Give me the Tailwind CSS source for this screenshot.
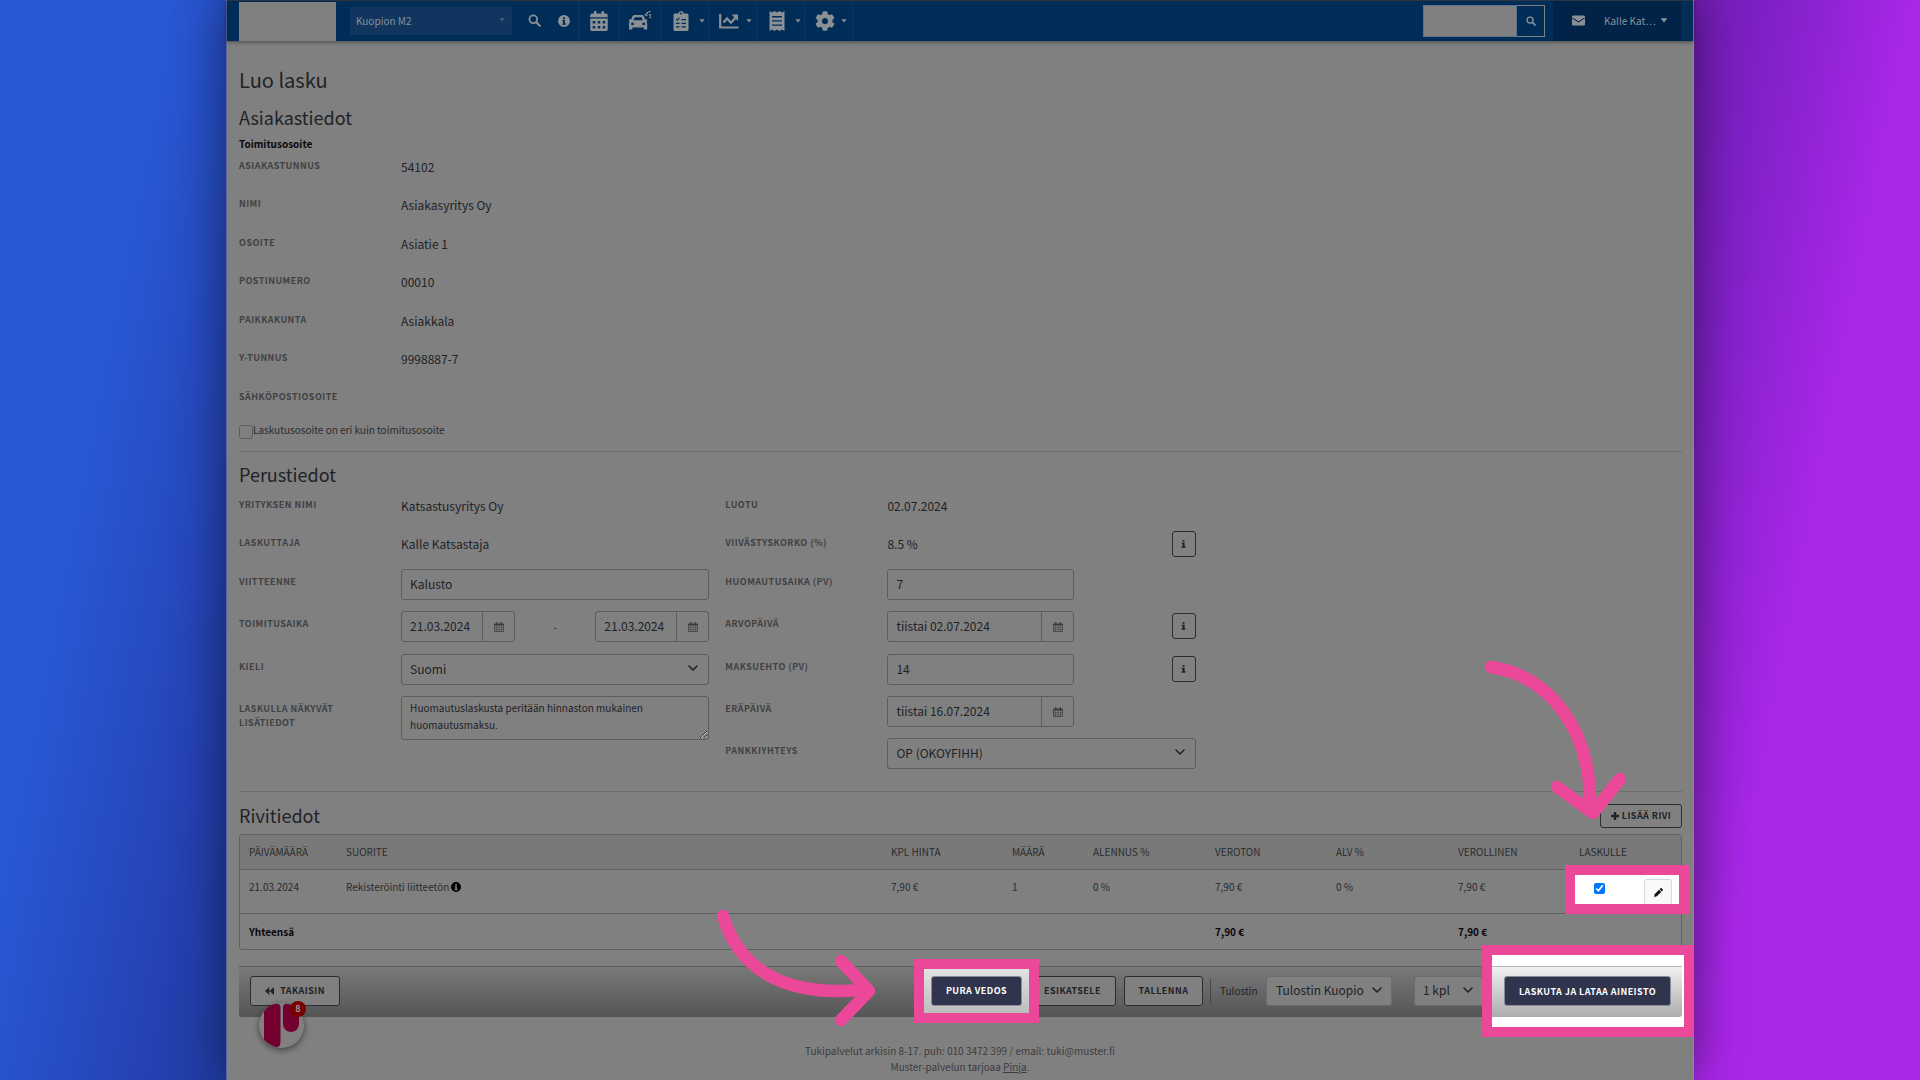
<!DOCTYPE html>
<html lang="fi">
<head>
<meta charset="utf-8">
<title>Luo lasku</title>
<script src="https://cdn.jsdelivr.net/npm/@tailwindcss/browser@4"></script>
</head>
<body class="flex min-h-screen overflow-x-hidden bg-[linear-gradient(101deg,#2958d5_8%,#2440b0_17%,#1e3a9a_22%,#6b1cab_78%,#7e20c6_83%,#a927e9_90%)] px-[226px] font-['Noto_Sans_CJK_SC','Source_Sans_Pro',sans-serif] text-[10px] leading-4 text-[#212226]">

<svg class="hidden" aria-hidden="true">
  <symbol id="search" viewBox="0 0 16 16"><circle cx="6.5" cy="6.5" r="4.8" fill="none" stroke="currentColor" stroke-width="2.2"/><path d="M10.2 10.2l4.3 4.3" stroke="currentColor" stroke-width="2.6" stroke-linecap="round"/></symbol>
  <symbol id="info" viewBox="0 0 16 16"><path fill="currentColor" fill-rule="evenodd" d="M8 0a8 8 0 1 0 0 16A8 8 0 0 0 8 0zM6.700 3h2.700v2.500H6.700zM5.700 6.600h3.700v4.700h1.100V13H5.700v-1.700h1.100V8.300H5.700z"/></symbol>
  <symbol id="i" viewBox="0 0 8 14"><path fill="currentColor" d="M2.500 0h3.200v3H2.500zM1 4.700h4.900v6.400H7.200V13.500H.8v-2.400h1.500V7H1z"/></symbol>
  <symbol id="caret" viewBox="0 0 8 5"><path fill="currentColor" d="M.5.3h7L4 4.600z"/></symbol>
  <symbol id="chevron" viewBox="0 0 12 12"><path d="M2 4l4 4 4-4" fill="none" stroke="currentColor" stroke-width="1.600" stroke-linecap="round" stroke-linejoin="round"/></symbol>
  <symbol id="smallcal" viewBox="0 0 14 14"><path fill="currentColor" fill-rule="evenodd" d="M1.200 2h1.600V.8Q2.800 0 3.800 0t1 .8V2h4.400V.8q0-.8 1-.8t1 .8V2h1.600Q14 2 14 3v10q0 1-1.200 1H1.200Q0 14 0 13V3q0-1 1.200-1zM1 5v2h2.500V5zm3.200 0v2h2.500V5zm3.200 0v2h2.500V5zm3.200 0v2H13V5zM1 7.700v2h2.500v-2zm3.200 0v2h2.500v-2zm3.200 0v2h2.500v-2zm3.200 0v2H13v-2zM1 10.500V13h2.500v-2.500zm3.200 0V13h2.500v-2.500zm3.200 0V13h2.500v-2.500zm3.200 0V13H13v-2.500z"/></symbol>
</svg>

<div class="relative flex min-w-0 flex-1 flex-col border-l border-r border-l-[#5a64a0] border-r-[#94849c] bg-[#808080] shadow-[0_0_48px_rgba(0,0,0,0.48)]">

  <header class="flex h-[41px] items-center border-t border-[#2b3440] bg-[#002c58] px-3 text-[#8b9095] shadow-[0_1px_4px_rgba(0,0,0,0.45)]">
    <a href="#" aria-label="Etusivu" class="h-[39px] w-[97px] shrink-0 bg-[#808080]"></a>
    <div class="relative ml-[14px] w-[162px]">
      <select aria-label="Toimipaikka" class="block h-7 w-full appearance-none bg-[#10355f] px-[6px] text-[10px] leading-4 text-[#8b9095]"><option>Kuopion M2</option></select>
      <svg class="pointer-events-none absolute right-[7px] top-[11px] h-1 w-[6px] text-[#555d66]"><use href="#caret"/></svg>
    </div>
    <nav class="flex h-full items-center [&>a]:pb-px">
      <a href="#" aria-label="Haku" class="ml-[7px] flex w-[30px] items-center justify-center"><svg class="size-[13px]"><use href="#search"/></svg></a>
      <a href="#" aria-label="Tiedot" class="flex w-[29px] items-center justify-center"><svg class="size-3"><use href="#info"/></svg></a>
      <a href="#" aria-label="Kalenteri" class="flex h-full w-[41px] items-center justify-center border-l border-[#0d3762]">
        <svg class="h-[20px] w-[18px]" viewBox="0 0 448 512"><path fill="currentColor" fill-rule="evenodd" d="M400 64h-48V16c0-9-7-16-16-16h-32c-9 0-16 7-16 16v48H160V16c0-9-7-16-16-16h-32c-9 0-16 7-16 16v48H48C21 64 0 85 0 112v48h448v-48c0-27-21-48-48-48zM0 192h448v272c0 27-21 48-48 48H48c-27 0-48-21-48-48zM64 256v64h64v-64zm128 0v64h64v-64zm128 0v64h64v-64zM64 384v64h64v-64zm128 0v64h64v-64zm128 0v64h64v-64z"/></svg>
      </a>
      <a href="#" aria-label="Ajoneuvot" class="flex h-full w-[41px] items-center justify-center border-l border-[#0d3762]">
        <svg class="h-[20px] w-[24px]" viewBox="0 0 24 20"><path fill="currentColor" fill-rule="evenodd" d="M6.500 4h7.500q1.300 0 1.900 1.300L17.200 8.500h2v1.700l-.9.400q.9.800.9 2.200v5.700h-3.400v-2H4.400v2H1v-5.700q0-1.400.9-2.200L1 10.200V8.500h2.100l1.400-3.200Q5.100 4 6.500 4zM6.700 6.200L5.500 9.200h9.400l-1.200-3zM4.500 11.500a1.400 1.400 0 1 0 0 2.800 1.400 1.400 0 0 0 0-2.800zm11.200 0a1.400 1.400 0 1 0 0 2.800 1.400 1.400 0 0 0 0-2.800z"/><path d="M17 3.200l2.200 1.600M19.700 1l-.7 2M21 4l2-.3M20.500.8L22.600.2M21.500 6l1.400.8" stroke="currentColor" stroke-width="1.600"/></svg>
      </a>
      <a href="#" aria-label="Tilaukset" class="flex h-full w-12 items-center border-l border-[#0d3762] pl-3">
        <svg class="h-[20px] w-4" viewBox="0 0 16 20"><path fill="currentColor" fill-rule="evenodd" d="M2 2.500h3.300Q5.800 0 8 0t2.700 2.500H14q1.500 0 1.500 1.500v14.500q0 1.500-1.500 1.500H2Q.5 20 .5 18.500V4Q.5 2.500 2 2.500zM8 1.500a1 1 0 1 0 0 2 1 1 0 0 0 0-2zM8.500 8v1.300H13V8zm0 3.700V13H13v-1.300zm0 3.600v1.300H13v-1.300zM3 11.700V13h3.500v-1.300zm0 3.600v1.300h3.500v-1.300z"/><path d="M3 8l1.200 1.300L6.500 7" fill="none" stroke="#002c58" stroke-width="1.100"/></svg>
        <svg class="ml-[10px] h-1 w-[6px]"><use href="#caret"/></svg>
      </a>
      <a href="#" aria-label="Raportit" class="flex h-full w-12 items-center border-l border-[#0d3762] pl-[10px]">
        <svg class="h-4 w-5" viewBox="0 0 20 16" fill="none" stroke="currentColor" stroke-width="2.200"><path d="M1.200 1v13.500H19.500"/><path d="M4.500 9.500l3.500-4 4 4.200 5-5.500"/><path fill="currentColor" stroke="none" d="M12.500 1.500H19V8z"/></svg>
        <svg class="ml-[7px] h-1 w-[6px]"><use href="#caret"/></svg>
      </a>
      <a href="#" aria-label="Kuitit" class="flex h-full w-12 items-center border-l border-[#0d3762] pl-3">
        <svg class="h-[20px] w-4" viewBox="0 0 16 20"><path fill="currentColor" fill-rule="evenodd" d="M.5 0L3 1.500 5.500 0 8 1.500 10.500 0 13 1.500 15.500 0v20L13 18.500 10.500 20 8 18.500 5.500 20 3 18.500.5 20zM3 5v1.400h10V5zm0 4.200v1.400h10V9.200zm0 4.200v1.400h10v-1.400z"/></svg>
        <svg class="ml-[10px] h-1 w-[6px]"><use href="#caret"/></svg>
      </a>
      <a href="#" aria-label="Asetukset" class="flex h-full w-[49px] items-center border-x border-[#0d3762] pl-[10px]">
        <svg class="size-5" viewBox="0 0 512 512"><path fill="currentColor" d="M487.400 315.700l-42.600-24.600c4.300-23.200 4.300-47 0-70.200l42.600-24.600c4.900-2.800 7.100-8.600 5.500-14-11.100-35.600-30-67.800-54.700-94.600-3.800-4.100-10-5.100-14.800-2.300L380.800 110c-17.900-15.400-38.500-27.300-60.800-35.100V25.800c0-5.600-3.900-10.500-9.400-11.700-36.700-8.200-74.300-7.800-109.200 0-5.500 1.200-9.400 6.100-9.400 11.700V75c-22.200 7.900-42.800 19.800-60.800 35.100L88.700 85.500c-4.900-2.800-11-1.900-14.800 2.300-24.700 26.700-43.600 58.900-54.700 94.600-1.700 5.400.6 11.200 5.500 14L67.300 221c-4.300 23.200-4.300 47 0 70.200l-42.600 24.600c-4.900 2.800-7.100 8.600-5.500 14 11.100 35.600 30 67.800 54.700 94.600 3.800 4.100 10 5.100 14.800 2.300l42.600-24.600c17.900 15.400 38.500 27.300 60.800 35.100v49.200c0 5.600 3.900 10.500 9.400 11.700 36.700 8.200 74.300 7.800 109.200 0 5.500-1.200 9.400-6.100 9.400-11.700v-49.200c22.200-7.900 42.800-19.800 60.800-35.100l42.600 24.600c4.900 2.800 11 1.900 14.800-2.300 24.700-26.700 43.600-58.900 54.700-94.600 1.500-5.500-.7-11.300-5.600-14.100zM256 336c-44.100 0-80-35.900-80-80s35.900-80 80-80 80 35.900 80 80-35.900 80-80 80z"/></svg>
        <svg class="ml-[6px] h-1 w-[6px]"><use href="#caret"/></svg>
      </a>
    </nav>
    <form class="ml-auto flex h-8">
      <input aria-label="Hae" class="w-[94px] border border-[#59738f] bg-[#808080] px-2">
      <button type="button" aria-label="Hae" class="flex w-7 items-center justify-center border border-l-0 border-[#808080] pb-px"><svg class="size-[10px]"><use href="#search"/></svg></button>
    </form>
    <div class="ml-2 flex h-full w-32 items-center bg-[#002347] pb-px">
      <a href="#" aria-label="Viestit" class="ml-[19px]"><svg class="h-[11px] w-[13px]" viewBox="0 0 14 11"><rect width="14" height="11" rx="1.500" fill="currentColor"/><path d="M.5 3L7 7l6.500-4" fill="none" stroke="#002347" stroke-width="1.100"/></svg></a>
      <button type="button" class="ml-[19px] flex items-center gap-1">Kalle Kat… <svg class="h-[5px] w-2"><use href="#caret"/></svg></button>
    </div>
  </header>

  <main class="pl-3 pr-[11px] pt-[25px]">
    <h1 class="pb-[2px] text-[20px] leading-[28px]">Luo lasku</h1>

    <section>
      <h2 class="mt-[10px] pb-[2px] text-[18px] leading-[22px]">Asiakastiedot</h2>
      <h3 class="mt-[6px] text-[10px] font-bold leading-4 text-[#08080a]">Toimitusosoite</h3>
      <dl class="mt-px grid h-[269px] grid-cols-[162px_1fr] grid-rows-7 text-[12px] [&>dt]:pt-[6px] [&>dt]:text-[9px] [&>dt]:font-bold [&>dt]:leading-[14px] [&>dt]:tracking-wider [&>dt]:text-[#414143] [&>dd]:pt-[6px]">
        <dt>ASIAKASTUNNUS</dt><dd>54102</dd>
        <dt>NIMI</dt><dd>Asiakasyritys Oy</dd>
        <dt>OSOITE</dt><dd>Asiatie 1</dd>
        <dt>POSTINUMERO</dt><dd>00010</dd>
        <dt>PAIKKAKUNTA</dt><dd>Asiakkala</dd>
        <dt>Y-TUNNUS</dt><dd>9998887-7</dd>
        <dt>SÄHKÖPOSTIOSOITE</dt><dd></dd>
      </dl>
      <label class="flex h-[29px] items-start text-[#2b2b2e]"><input type="checkbox" class="mt-[3px] size-[14px] appearance-none rounded-[3px] border border-[#5d5d5f]">Laskutusosoite on eri kuin toimitusosoite</label>
    </section>

    <section class="border-t border-[#6c6c6c] pt-[11px]">
      <h2 class="pb-[2px] text-[18px] leading-[22px]">Perustiedot</h2>
      <div class="mt-[5px] grid grid-cols-9 gap-x-4 text-[12px] [&_.l]:pt-[6px] [&_.l]:text-[9px] [&_.l]:font-bold [&_.l]:leading-[14px] [&_.l]:tracking-wider [&_.l]:text-[#414143] [&_input]:pb-[2px] [&_select]:pb-[2px]">
        <div class="col-span-3 grid grid-cols-3 content-start gap-x-4">
          <div class="l h-[38px]">YRITYKSEN NIMI</div><div class="col-span-2 pt-[6px]">Katsastusyritys Oy</div>
          <div class="l h-[39px]">LASKUTTAJA</div><div class="col-span-2 pt-[6px]">Kalle Katsastaja</div>
          <label for="viite" class="l h-[42px]">VIITTEENNE</label>
          <input id="viite" value="Kalusto" class="col-span-2 h-[31px] rounded-[3px] border border-[#5d5d5f] px-2">
          <label for="alku" class="l h-[43px]">TOIMITUSAIKA</label>
          <div class="col-span-2 flex items-center self-start text-[#3c3c3e]">
            <div class="flex h-[31px] w-[114px] rounded-[3px] border border-[#5d5d5f]"><input id="alku" value="21.03.2024" class="min-w-0 flex-1 pl-2 text-[#212226]"><button type="button" aria-label="Valitse alkupäivä" class="flex w-8 items-center justify-center border-l border-[#5d5d5f]"><svg class="size-[10px]"><use href="#smallcal"/></svg></button></div>
            <span class="flex-1 text-center text-[12px]">-</span>
            <div class="flex h-[31px] w-[114px] rounded-[3px] border border-[#5d5d5f]"><input aria-label="Toimitusaika päättyy" value="21.03.2024" class="min-w-0 flex-1 pl-2 text-[#212226]"><button type="button" aria-label="Valitse loppupäivä" class="flex w-8 items-center justify-center border-l border-[#5d5d5f]"><svg class="size-[10px]"><use href="#smallcal"/></svg></button></div>
          </div>
          <label for="kieli" class="l h-[42px]">KIELI</label>
          <div class="relative col-span-2">
            <select id="kieli" class="h-[31px] w-full appearance-none rounded-[3px] border border-[#5d5d5f] px-2"><option>Suomi</option></select>
            <svg class="pointer-events-none absolute right-[10px] top-2 size-3"><use href="#chevron"/></svg>
          </div>
          <label for="lisa" class="l">LASKULLA NÄKYVÄT LISÄTIEDOT</label>
          <textarea id="lisa" class="col-span-2 h-11 rounded-[3px] border border-[#5d5d5f] px-2 py-[2px] text-[10px] leading-[17px]">Huomautuslaskusta peritään hinnaston mukainen huomautusmaksu.</textarea>
        </div>
        <div class="col-span-3 grid grid-cols-3 content-start gap-x-4">
          <div class="l h-[38px]">LUOTU</div><div class="col-span-2 pt-[6px]">02.07.2024</div>
          <div class="l h-[39px]">VIIVÄSTYSKORKO (%)</div>
          <div class="col-span-2 flex items-start justify-between"><span class="pt-[6px]">8.5 %</span><button type="button" aria-label="Tietoa viivästyskorosta" class="mt-px flex h-[26px] w-6 items-center justify-center rounded-[3px] border border-[#2b2c36]"><svg class="h-2 w-[5px]"><use href="#i"/></svg></button></div>
          <label for="huom" class="l h-[42px]">HUOMAUTUSAIKA (PV)</label>
          <div class="col-span-2"><input id="huom" value="7" class="h-[31px] w-[187px] rounded-[3px] border border-[#5d5d5f] px-2"></div>
          <label for="arvo" class="l h-[43px]">ARVOPÄIVÄ</label>
          <div class="col-span-2 flex items-start justify-between">
            <div class="flex h-[31px] w-[187px] rounded-[3px] border border-[#5d5d5f]"><input id="arvo" value="tiistai 02.07.2024" class="min-w-0 flex-1 pl-2"><button type="button" aria-label="Valitse arvopäivä" class="flex w-8 items-center justify-center border-l border-[#5d5d5f] text-[#3c3c3e]"><svg class="size-[10px]"><use href="#smallcal"/></svg></button></div>
            <button type="button" aria-label="Tietoa arvopäivästä" class="mt-[2px] flex h-[26px] w-6 items-center justify-center rounded-[3px] border border-[#2b2c36]"><svg class="h-2 w-[5px]"><use href="#i"/></svg></button>
          </div>
          <label for="ehto" class="l h-[42px]">MAKSUEHTO (PV)</label>
          <div class="col-span-2 flex items-start justify-between">
            <input id="ehto" value="14" class="h-[31px] w-[187px] rounded-[3px] border border-[#5d5d5f] px-2">
            <button type="button" aria-label="Tietoa maksuehdosta" class="mt-[2px] flex h-[26px] w-6 items-center justify-center rounded-[3px] border border-[#2b2c36]"><svg class="h-2 w-[5px]"><use href="#i"/></svg></button>
          </div>
          <label for="era" class="l h-[42px]">ERÄPÄIVÄ</label>
          <div class="col-span-2">
            <div class="flex h-[31px] w-[187px] rounded-[3px] border border-[#5d5d5f]"><input id="era" value="tiistai 16.07.2024" class="min-w-0 flex-1 pl-2"><button type="button" aria-label="Valitse eräpäivä" class="flex w-8 items-center justify-center border-l border-[#5d5d5f] text-[#3c3c3e]"><svg class="size-[10px]"><use href="#smallcal"/></svg></button></div>
          </div>
          <label for="pankki" class="l h-[53px]">PANKKIYHTEYS</label>
          <div class="relative col-span-2">
            <select id="pankki" class="h-[31px] w-full appearance-none rounded-[3px] border border-[#5d5d5f] px-2"><option>OP (OKOYFIHH)</option></select>
            <svg class="pointer-events-none absolute right-[10px] top-2 size-3"><use href="#chevron"/></svg>
          </div>
        </div>
      </div>
    </section>

    <section class="border-t border-[#6c6c6c] pt-3">
      <div class="relative flex items-center justify-between">
        <h2 class="pb-[2px] text-[18px] leading-[22px]">Rivitiedot</h2>
        <button type="button" class="flex h-6 w-[82px] items-center justify-center gap-[3px] rounded-[3px] border border-[#2b2c36] text-[9px] font-bold tracking-wider"><svg class="size-2" viewBox="0 0 8 8"><path d="M4 0v8M0 4h8" stroke="currentColor" stroke-width="2.400"/></svg>LISÄÄ RIVI</button>
        <svg class="pointer-events-none absolute -top-36 right-[46px] z-20 h-40 w-40" viewBox="0 0 160 160" fill="none" stroke="#ec4899" stroke-width="12.500" stroke-linecap="round" stroke-linejoin="round"><path d="M15 7C74 16 115 70 114 145"/><path d="M81 127l36 26 27-34"/></svg>
      </div>

      <table class="mt-[6px] w-full table-fixed border-separate border-spacing-0 rounded-[3px] border border-[#606060] text-left text-[10px] leading-4 text-[#2b2b2e] [&_th]:pl-[9px] [&_th]:font-normal [&_td]:pl-[9px]">
        <colgroup><col class="w-[97px]"><col><col class="w-[121px]"><col class="w-[81px]"><col class="w-[122px]"><col class="w-[121px]"><col class="w-[122px]"><col class="w-[121px]"><col class="w-[111px]"></colgroup>
        <thead class="bg-[#797979]">
          <tr class="h-[35px] [&>th]:border-b [&>th]:border-[#606060]"><th>PÄIVÄMÄÄRÄ</th><th>SUORITE</th><th>KPL HINTA</th><th>MÄÄRÄ</th><th>ALENNUS %</th><th>VEROTON</th><th>ALV %</th><th>VEROLLINEN</th><th>LASKULLE</th></tr>
        </thead>
        <tbody>
          <tr class="h-11 align-top [&>td]:border-b [&>td]:border-[#606060] [&>td]:pt-[9px]"><td>21.03.2024</td><td><span class="flex items-center gap-[2px]">Rekisteröinti liitteetön<svg class="size-[10px] text-black"><use href="#info"/></svg></span></td><td>7,90 €</td><td>1</td><td>0 %</td><td>7,90 €</td><td>0 %</td><td>7,90 €</td>
            <td class="relative">
              <div class="absolute -right-2 -top-[5px] z-10 flex h-[49px] w-[124px] items-start overflow-hidden border-10 border-[#ec4899] bg-white">
                <input type="checkbox" checked aria-label="Laskulle" class="ml-[19px] mt-2 size-[11px] accent-[#0075ff]">
                <button type="button" aria-label="Muokkaa riviä" class="ml-auto mr-[7px] mt-1 flex h-[26px] w-7 shrink-0 items-center justify-center rounded-[3px] border border-[#d5d8dc] bg-[#f8f9fa]"><svg class="size-[9px]" viewBox="0 0 16 16"><path fill="#111" d="M0 16l1.200-5L9 3.200 12.800 7 5 14.800zM10 2.200L11.600.6q1-1 2 0l1.800 1.800q1 1 0 2L13.800 6z"/></svg></button>
              </div>
            </td></tr>
        </tbody>
        <tfoot>
          <tr class="h-[35px] font-bold text-[#08080a]"><td>Yhteensä</td><td></td><td></td><td></td><td></td><td>7,90 €</td><td></td><td>7,90 €</td><td></td></tr>
        </tfoot>
      </table>
    </section>

    <div class="relative mt-4 flex h-[51px] items-center rounded-b-[3px] border-t border-[#5c5c5c] bg-linear-to-b from-[#797979] to-[#555] pb-[2px] pl-[11px] pr-[11px] text-[9px] tracking-wider">
      <button type="button" class="flex h-[30px] w-[90px] items-center justify-center gap-[6px] rounded-[3px] border border-[#2b2c36] bg-[#808080] font-bold tracking-wider"><svg class="h-2 w-[9px]" viewBox="0 0 9 8"><path fill="currentColor" d="M4.300 0v8L0 4zM9 0v8L4.500 4z"/></svg>TAKAISIN</button>

      <div class="relative isolate z-10 ml-auto">
        <div class="absolute -inset-x-[17px] -bottom-[17px] -top-[17px] border-10 border-[#ec4899] bg-linear-to-b from-[#ebebeb] to-[#b5b5b5] bg-origin-border"></div>
        <button type="button" class="relative h-[30px] w-[91px] rounded-[3px] border border-[#8a8c96] bg-[#30354d] font-bold tracking-wider text-white">PURA VEDOS</button>
        <svg class="pointer-events-none absolute -left-[216px] -top-[70px] h-[122px] w-[168px]" viewBox="0 0 168 122" fill="none" stroke="#ec4899" stroke-width="12.500" stroke-linecap="round" stroke-linejoin="round"><path d="M8 10C23 60 65 91 145 84"/><path d="M126 55l28 30-28 29"/></svg>
      </div>
      <button type="button" class="ml-[7px] h-[30px] w-[87px] rounded-[3px] border border-[#2b2c36] bg-[#808080] font-bold tracking-wider">ESIKATSELE</button>
      <button type="button" class="ml-2 h-[30px] w-[79px] rounded-[3px] border border-[#2b2c36] bg-[#808080] font-bold tracking-wider">TALLENNA</button>
      <div class="ml-[7px] h-6 w-px bg-[#464646]"></div>
      <label for="tulostin" class="ml-[9px] w-[46px] text-[10px] tracking-normal">Tulostin</label>
      <div class="relative w-[126px]">
        <select id="tulostin" class="block h-[30px] w-full appearance-none rounded-[3px] border border-[#6c6c6c] bg-[#808080] px-[9px] pb-[2px] text-[12px] tracking-normal"><option>Tulostin Kuopio</option></select>
        <svg class="pointer-events-none absolute right-[9px] top-2 size-3"><use href="#chevron"/></svg>
      </div>
      <div class="relative ml-[22px] w-[72px]">
        <select aria-label="Kappalemäärä" class="block h-[30px] w-full appearance-none rounded-[3px] border border-[#6c6c6c] bg-[#808080] px-2 pb-[2px] text-[12px] tracking-normal"><option>1 kpl</option></select>
        <svg class="pointer-events-none absolute right-3 top-2 size-3"><use href="#chevron"/></svg>
      </div>
      <div class="relative isolate z-10 ml-[18px]">
        <div class="absolute -left-[22px] -right-[23px] -bottom-[31px] -top-[31px] border-10 border-[#ec4899] bg-white pr-[2px] pt-[11px]"><div class="h-[51px] rounded-br-[3px] border-t border-[#b8b8b8] bg-linear-to-b from-[#f0f0f0] to-[#adadad]"></div></div>
        <button type="button" class="relative h-[30px] w-[167px] rounded-[3px] border border-[#8a8c96] bg-[#30354d] pt-px font-bold tracking-wider text-white">LASKUTA JA LATAA AINEISTO</button>
      </div>

      <button type="button" aria-label="Avaa ohjekeskus, 8 uutta" class="absolute left-5 top-9 size-[45px] rounded-full bg-[#808080] tracking-normal shadow-[0_2px_6px_rgba(0,0,0,0.5)]">
        <svg class="size-[45px]" viewBox="0 0 45 45"><path fill="#73002f" d="M5 8.500Q10 1.500 17 .8Q21.500.5 21.500 5v34Q21.500 44.500 17 44Q10 42 5 36.500zM24 4.500Q24 .8 28 .8Q36 2 40 8v13a8 8 0 0 1-16 0z"/></svg>
        <span class="absolute -right-[2px] -top-[2px] size-4 rounded-full bg-[#780000] text-center text-[9px] font-bold leading-4 text-[#9a9a9a]">8</span>
      </button>
    </div>
  </main>

  <footer class="mt-[26px] text-center text-[10px] leading-4 text-[#3c3c3e]">
    <p>Tukipalvelut arkisin 8-17. puh: 010 3472 399 / email: tuki@muster.fi</p>
    <p>Muster-palvelun tarjoaa <a href="#" class="underline">Pinja</a>.</p>
  </footer>
</div>
</body>
</html>
